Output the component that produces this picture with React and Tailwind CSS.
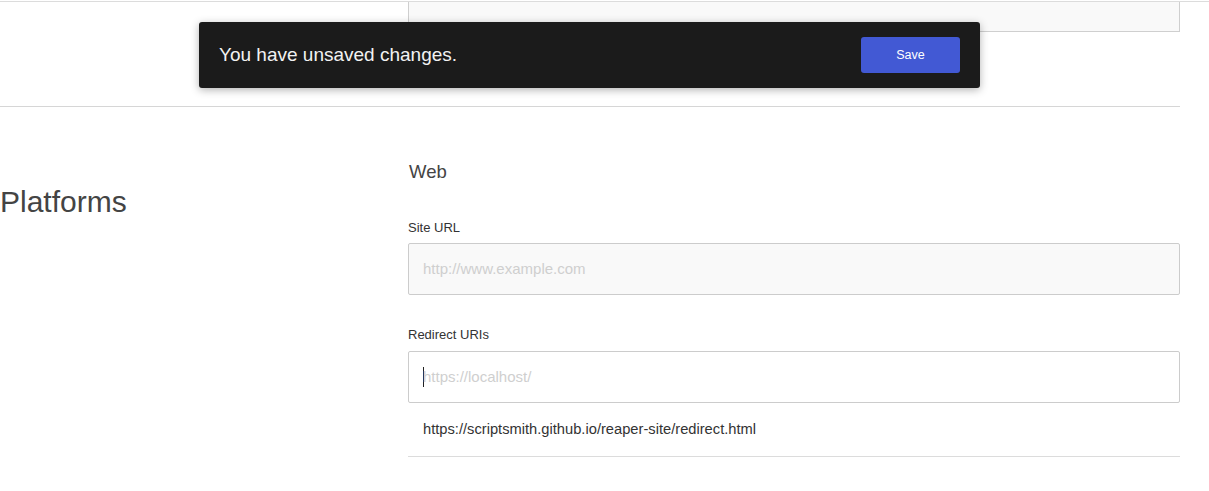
const Field = ({ label, children, className = "" }) => {
  return (
    <div className={className}>
      <label className="block text-[13px] leading-[18px] text-[#333]">
        {label}
      </label>
      {children}
    </div>
  );
};

const App = () => {
  return (
    <div
      className="relative min-h-[491px] bg-white text-[#333]"
      style={{ fontFamily: '"Liberation Sans", Arial, sans-serif' }}
    >
      {/* top strip: tail of the previous section */}
      <div className="mt-px border-t border-[#dcdcdc]">
        <div className="ml-[408px] h-[30px] w-[772px] border-x border-b border-[#cfcfcf] bg-[#f9f9f9]"></div>
      </div>
      <div className="mt-[74px] w-[1180px] border-t border-[#d6d6d6]"></div>

      {/* platforms */}
      <section className="flex w-[1180px]">
        <div className="w-[408px] pt-[77px]">
          <h2 className="text-[30px] leading-[36px] text-[#444]">Platforms</h2>
        </div>
        <div className="w-[772px] pt-[53px]">
          <h3 className="pl-px text-[18.5px] leading-[24px] text-[#444]">Web</h3>

          <Field label="Site URL" className="mt-[35px]">
            <div className="mt-[6px] flex h-[52px] items-center rounded-[2px] border border-[#cccccc] bg-[#f9f9f9] pl-[14px] text-[15px] text-[#cfcfcf]">
              http://www.example.com
            </div>
          </Field>

          <Field label="Redirect URIs" className="mt-[31px]">
            <div className="mt-[7px] flex h-[52px] items-center rounded-[2px] border border-[#cccccc] bg-white pl-[14px] text-[15px] text-[#cfcfcf]">
              <span className="mr-[-1px] h-[20px] w-px bg-[#222]"></span>
              https://localhost/
            </div>
          </Field>

          <ul>
            <li className="flex h-[54px] items-center border-b border-[#dcdcdc] pl-[15px] text-[14.7px] text-[#333]">
              https://scriptsmith.github.io/reaper-site/redirect.html
            </li>
          </ul>
        </div>
      </section>

      {/* unsaved changes toast */}
      <div className="absolute left-[199px] top-[21px] flex h-[66px] w-[781px] items-center justify-between rounded-[3px] bg-[#1b1b1b] pl-[20px] pr-[20px] shadow-[0_2px_8px_rgba(0,0,0,0.3)]">
        <span className="text-[19px] text-[#f2f2f2]">You have unsaved changes.</span>
        <button className="h-[36px] w-[99px] rounded-[3px] bg-[#4259d4] text-[12.5px] text-white">
          Save
        </button>
      </div>
    </div>
  );
};

export default App;
